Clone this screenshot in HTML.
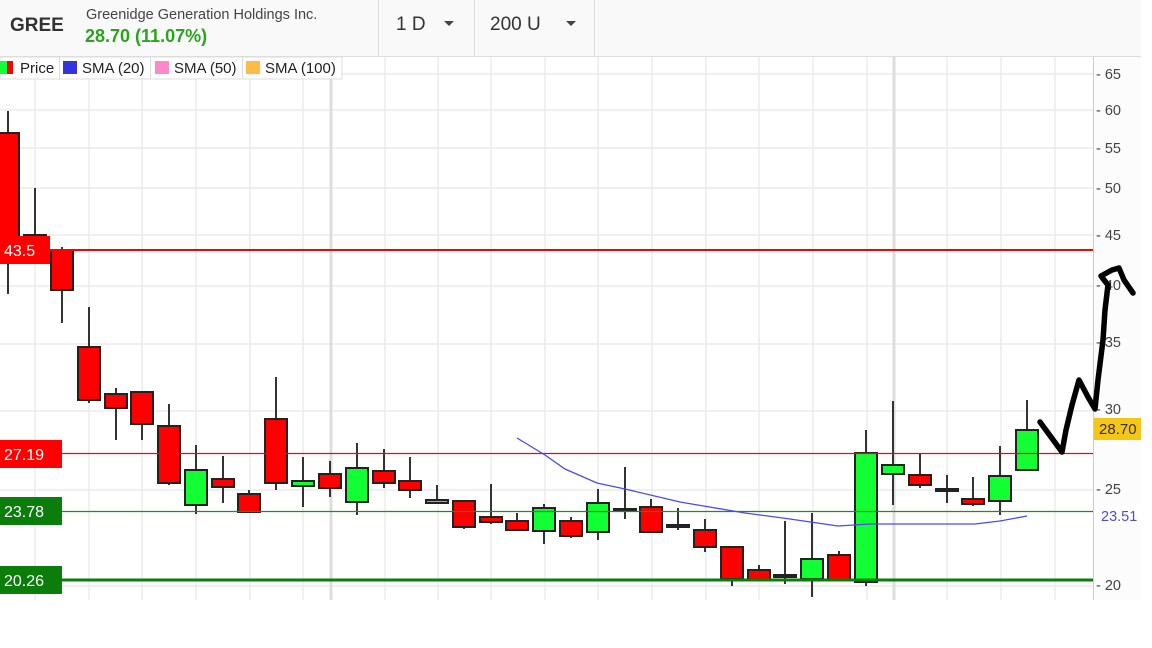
<!DOCTYPE html>
<html><head><meta charset="utf-8"><style>
html,body{margin:0;padding:0;width:1152px;height:648px;background:#fff;overflow:hidden;font-family:"Liberation Sans",Arial,sans-serif}
</style></head><body>
<svg width="1152" height="648" xmlns="http://www.w3.org/2000/svg" style="position:absolute;left:0;top:0;font-family:'Liberation Sans',Arial,sans-serif">
<rect x="0" y="0" width="1141" height="56" fill="#f9f9f9"/>
<line x1="0" y1="56.5" x2="1141" y2="56.5" stroke="#ddd"/>
<line x1="378.5" y1="0" x2="378.5" y2="56" stroke="#ddd"/>
<line x1="474.5" y1="0" x2="474.5" y2="56" stroke="#ddd"/>
<line x1="594.5" y1="0" x2="594.5" y2="56" stroke="#ddd"/>
<text x="10" y="31" font-size="19" font-weight="bold" fill="#333">GREE</text>
<text x="86" y="19" font-size="14.5" fill="#444">Greenidge Generation Holdings Inc.</text>
<text x="85" y="42" font-size="18" font-weight="bold" fill="#2aa31f">28.70 (11.07%)</text>
<text x="396" y="30" font-size="19" fill="#333">1 D</text>
<path d="M444 21h10l-5 5z" fill="#444"/>
<text x="490" y="30" font-size="19" fill="#333">200 U</text>
<path d="M566 21h10l-5 5z" fill="#444"/>
<rect x="0" y="57" width="1093" height="543" fill="#fff"/>
<rect x="1093" y="57" width="48" height="543" fill="#fcfcfc"/>
<g stroke="#ebebeb" stroke-width="1.5">
<line x1="0" y1="74" x2="1093" y2="74"/><line x1="0" y1="110" x2="1093" y2="110"/><line x1="0" y1="148" x2="1093" y2="148"/><line x1="0" y1="188" x2="1093" y2="188"/><line x1="0" y1="235" x2="1093" y2="235"/><line x1="0" y1="286" x2="1093" y2="286"/><line x1="0" y1="344" x2="1093" y2="344"/><line x1="0" y1="411" x2="1093" y2="411"/><line x1="0" y1="490" x2="1093" y2="490"/><line x1="0" y1="586" x2="1093" y2="586"/>
<line x1="35" y1="57" x2="35" y2="600"/><line x1="89" y1="57" x2="89" y2="600"/><line x1="142" y1="57" x2="142" y2="600"/><line x1="196" y1="57" x2="196" y2="600"/><line x1="250" y1="57" x2="250" y2="600"/><line x1="303" y1="57" x2="303" y2="600"/><line x1="385" y1="57" x2="385" y2="600"/><line x1="438" y1="57" x2="438" y2="600"/><line x1="491" y1="57" x2="491" y2="600"/><line x1="545" y1="57" x2="545" y2="600"/><line x1="598" y1="57" x2="598" y2="600"/><line x1="652" y1="57" x2="652" y2="600"/><line x1="706" y1="57" x2="706" y2="600"/><line x1="759" y1="57" x2="759" y2="600"/><line x1="813" y1="57" x2="813" y2="600"/><line x1="867" y1="57" x2="867" y2="600"/><line x1="947" y1="57" x2="947" y2="600"/><line x1="1001" y1="57" x2="1001" y2="600"/><line x1="1055" y1="57" x2="1055" y2="600"/>
</g>
<line x1="331" y1="57" x2="331" y2="600" stroke="#ddd" stroke-width="3"/>
<line x1="894" y1="57" x2="894" y2="600" stroke="#ddd" stroke-width="3"/>
<line x1="1093.5" y1="57" x2="1093.5" y2="600" stroke="#ccc"/>
<g font-size="14.5" fill="#444">
<text x="1096" y="79">- 65</text><text x="1096" y="115">- 60</text><text x="1096" y="153">- 55</text><text x="1096" y="193">- 50</text><text x="1096" y="240">- 45</text><text x="1096" y="290">- 40</text><text x="1096" y="347">- 35</text><text x="1096" y="414">- 30</text><text x="1096" y="494">- 25</text><text x="1096" y="590">- 20</text>
</g>
<g stroke="#333" stroke-width="2">
<line x1="8" y1="111" x2="8" y2="294"/><line x1="35" y1="188" x2="35" y2="250"/><line x1="62" y1="247" x2="62" y2="323"/><line x1="89" y1="307" x2="89" y2="403"/><line x1="116" y1="388" x2="116" y2="440"/><line x1="142" y1="392" x2="142" y2="440"/><line x1="169" y1="404" x2="169" y2="485"/><line x1="196" y1="445" x2="196" y2="514"/><line x1="223" y1="456" x2="223" y2="503"/><line x1="249" y1="490" x2="249" y2="513"/><line x1="276" y1="377" x2="276" y2="490"/><line x1="303" y1="457" x2="303" y2="507"/><line x1="330" y1="461" x2="330" y2="497"/><line x1="357" y1="443" x2="357" y2="515"/><line x1="384" y1="449" x2="384" y2="488"/><line x1="410" y1="457" x2="410" y2="498"/><line x1="437" y1="485" x2="437" y2="504"/><line x1="464" y1="501" x2="464" y2="529"/><line x1="491" y1="484" x2="491" y2="524"/><line x1="517" y1="513" x2="517" y2="531"/><line x1="544" y1="504" x2="544" y2="544"/><line x1="571" y1="517" x2="571" y2="538"/><line x1="598" y1="489" x2="598" y2="540"/><line x1="625" y1="467" x2="625" y2="519"/><line x1="651" y1="499" x2="651" y2="532"/><line x1="678" y1="508" x2="678" y2="530"/><line x1="705" y1="519" x2="705" y2="552"/><line x1="732" y1="547" x2="732" y2="586"/><line x1="759" y1="565" x2="759" y2="580"/><line x1="785" y1="521" x2="785" y2="584"/><line x1="812" y1="513" x2="812" y2="597"/><line x1="839" y1="551" x2="839" y2="580"/><line x1="866" y1="430" x2="866" y2="586"/><line x1="893" y1="401" x2="893" y2="505"/><line x1="920" y1="453" x2="920" y2="488"/><line x1="947" y1="475" x2="947" y2="503"/><line x1="973" y1="477" x2="973" y2="506"/><line x1="1000" y1="446" x2="1000" y2="515"/><line x1="1027" y1="400" x2="1027" y2="470"/>
</g>
<g stroke="#222" stroke-width="2">
<g fill="#ff0000">
<rect x="-3" y="133" width="22" height="104"/><rect x="51" y="250" width="22" height="40"/><rect x="78" y="347" width="22" height="53"/><rect x="105" y="394" width="22" height="14"/><rect x="131" y="392" width="22" height="32"/><rect x="158" y="426" width="22" height="57"/><rect x="212" y="479" width="22" height="8"/><rect x="238" y="494" width="22" height="18"/><rect x="265" y="419" width="22" height="64"/><rect x="319" y="474" width="22" height="14"/><rect x="373" y="471" width="22" height="12"/><rect x="399" y="481" width="22" height="9"/><rect x="453" y="501" width="22" height="26"/><rect x="480" y="517" width="22" height="5"/><rect x="506" y="521" width="22" height="9"/><rect x="560" y="521" width="22" height="15"/><rect x="640" y="507" width="22" height="25"/><rect x="694" y="530" width="22" height="17"/><rect x="721" y="547" width="22" height="32"/><rect x="748" y="570" width="22" height="10"/><rect x="828" y="555" width="22" height="25"/><rect x="909" y="475" width="22" height="10"/><rect x="962" y="499" width="22" height="5"/>
</g>
<g fill="#11ff33">
<rect x="185" y="470" width="22" height="35"/><rect x="292" y="481" width="22" height="5"/><rect x="346" y="468" width="22" height="34"/><rect x="426" y="500" width="22" height="3"/><rect x="533" y="508" width="22" height="23"/><rect x="587" y="503" width="22" height="29"/><rect x="801" y="559" width="22" height="20"/><rect x="855" y="453" width="22" height="129"/><rect x="882" y="465" width="22" height="9"/><rect x="989" y="476" width="22" height="25"/><rect x="1016" y="430" width="22" height="40"/>
</g>
<rect x="24" y="235" width="22" height="2" fill="#f00"/>
<rect x="614" y="509" width="22" height="2" fill="#060"/>
<rect x="667" y="525" width="22" height="2" fill="#600"/>
<rect x="774" y="575" width="22" height="2" fill="#111"/>
<rect x="936" y="489" width="22" height="2" fill="#111"/>
</g>
<line x1="0" y1="250" x2="1093" y2="250" stroke="#f00" stroke-width="2"/>
<line x1="0" y1="453.5" x2="1093" y2="453.5" stroke="#f00" stroke-width="1.3"/>
<line x1="0" y1="511.5" x2="1093" y2="511.5" stroke="#1a8f1a" stroke-width="1.3"/>
<line x1="0" y1="580" x2="1093" y2="580" stroke="#0a7d0a" stroke-width="3"/>
<polyline points="517,438 545,455 565,469 597,483 625,489 680,502 745,513 790,519 838,526 870,524 975,524 1000,521 1027,516" fill="none" stroke="#4a4aee" stroke-width="1.3"/>
<rect x="0" y="236" width="50" height="28" fill="#f00"/><text x="4" y="256" font-size="16" fill="#fff">43.5</text>
<rect x="0" y="440" width="62" height="28" fill="#f00"/><text x="4" y="460" font-size="16" fill="#fff">27.19</text>
<rect x="0" y="497" width="62" height="28" fill="#0a7d0a"/><text x="4" y="517" font-size="16" fill="#fff">23.78</text>
<rect x="0" y="566" width="62" height="28" fill="#0a7d0a"/><text x="4" y="586" font-size="16" fill="#fff">20.26</text>
<rect x="1094" y="418" width="47" height="22" fill="#f5c518"/><text x="1099" y="434" font-size="15" fill="#333">28.70</text>
<rect x="1095" y="505" width="46" height="21" fill="#fff"/><text x="1101" y="521" font-size="14.5" fill="#4a4aee">23.51</text>
<path d="M1040 422 L1062 452 L1066 430 L1072 405 L1079 380 L1088 397 L1095 409 L1098 380 L1103 340 L1105 310 L1108 285 L1101 276 L1112 270 L1119 268 L1124 280 L1133 293" fill="none" stroke="#000" stroke-width="5.5" stroke-linejoin="round" stroke-linecap="round"/>
<rect x="0" y="57" width="342" height="22" fill="#fff" stroke="#ddd"/>
<line x1="59.5" y1="57" x2="59.5" y2="79" stroke="#ddd"/><line x1="150.5" y1="57" x2="150.5" y2="79" stroke="#ddd"/><line x1="242.5" y1="57" x2="242.5" y2="79" stroke="#ddd"/>
<rect x="0" y="61" width="7" height="13" fill="#11ff33"/><rect x="7" y="61" width="6" height="13" fill="#f00"/>
<text x="20" y="73" font-size="15" fill="#222">Price</text>
<rect x="63" y="61" width="14" height="13" fill="#3333dd"/><text x="82" y="73" font-size="15" fill="#222">SMA (20)</text>
<rect x="155" y="61" width="14" height="13" fill="#ff88cc"/><text x="174" y="73" font-size="15" fill="#222">SMA (50)</text>
<rect x="246" y="61" width="14" height="13" fill="#ffbb44"/><text x="265" y="73" font-size="15" fill="#222">SMA (100)</text>
</svg>
</body></html>
